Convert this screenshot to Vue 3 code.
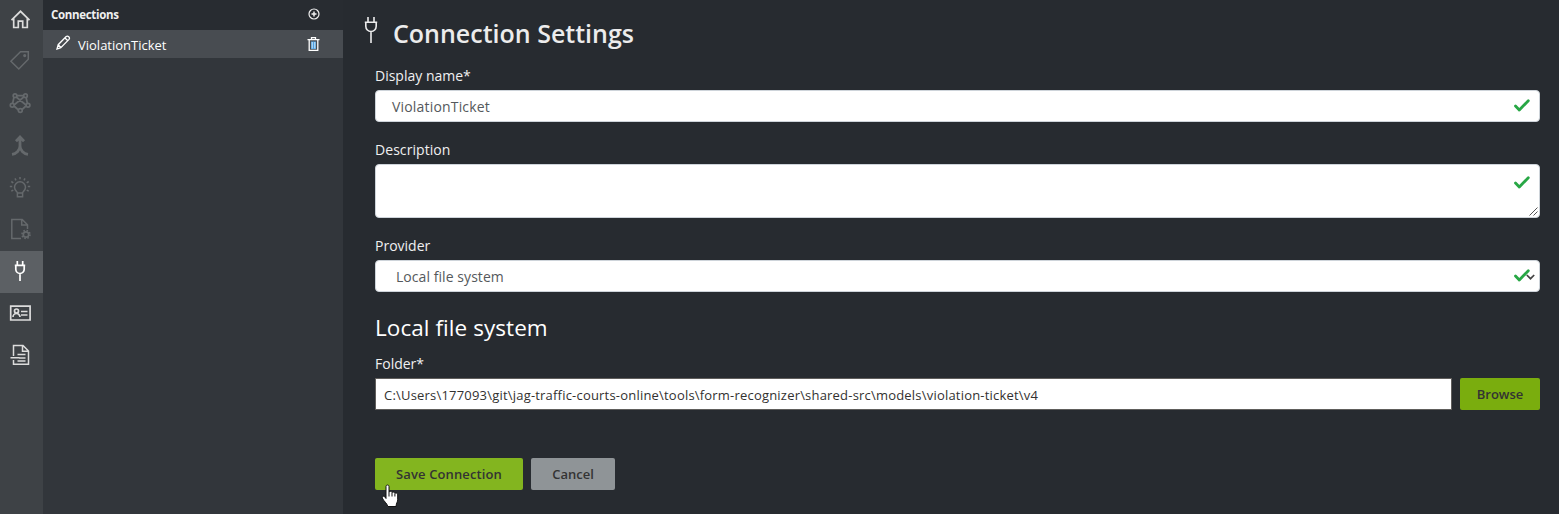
<script setup>
const nav = ['home', 'tag', 'model', 'merge', 'bulb', 'doc', 'plug', 'card', 'page']
const disabled = ['tag', 'model', 'merge', 'bulb', 'doc']
</script>

<template>
  <div class="app">
    <nav class="rail">
      <div v-for="n in nav" :key="n" class="item" :class="[n, { active: n === 'plug', dim: disabled.includes(n) }]">
        <svg width="22" height="22" viewBox="0 0 22 22" fill="none" stroke="currentColor" stroke-width="1.5">
          <path v-if="n === 'home'" stroke-width="1.700" d="M2.500 11.200 11.500 2.300l9 8.900M4.700 9.500v9h4.600v-6.300h4.400v6.300h4.600v-9" />
          <g v-else-if="n === 'tag'"><path d="M11.500 2.700h7.800v7.600L9.800 20 1.900 12.200z" /><circle cx="15.700" cy="6.600" r=".8" /></g>
          <g v-else-if="n === 'model'" stroke-width="1.700">
            <path d="M6 3.700h10M6 4l11 9M16 4 5 13M5 5 3.500 12M17 5l1.500 7M5 14l4.500 4M17 14l-4.500 4" />
            <g class="node"><circle cx="6" cy="3.700" r="1.800" /><circle cx="16.500" cy="3.700" r="1.800" /><circle cx="3.200" cy="13.300" r="1.900" /><circle cx="19" cy="13.300" r="1.900" /><circle cx="11.300" cy="18.500" r="1.900" /></g>
          </g>
          <path v-else-if="n === 'merge'" stroke-width="2.800" d="M7 6.200 11 2l4 4.200M11 2.500v8.500c0 4-3.500 7.700-8 8.300M11 11c0 4 3.500 7.700 8 8.300" />
          <g v-else-if="n === 'bulb'"><path d="M8.400 19.700v-4.100c-1-1.400-2.900-2.800-2.900-5.300a5.500 5.500 0 0 1 11 0c0 2.500-1.900 3.900-2.900 5.300v4.100zM8.400 16h5.200" /><path d="M11 0v2.300M6 1.300l1 2M16 1.300l-1 2M2.300 4.500l2 1.300M19.700 4.500l-2 1.300M.8 9.500h2.400M18.800 9.500h2.400M2.300 14.200l2-1M19.700 14.200l-2-1" /></g>
          <g v-else-if="n === 'doc'"><path d="M12 20.500H2.800V1.500h10.400l5.300 5.300V11M12.700 1.500v5.600h5.800" /><circle cx="17" cy="16.500" r="2.700" stroke-width="1.700" /><circle cx="17" cy="16.500" r="4" stroke-width="1.600" stroke-dasharray="1.570 1.570" /></g>
          <path v-else-if="n === 'plug'" stroke-width="1.700" d="M8.300 1v4.200M13.700 1v4.200M5.800 5.400h10.400M6.800 5.400v3.900a4.200 4.200 0 0 0 8.400 0V5.400M11 13.500v7.500" />
          <g v-else-if="n === 'card'" stroke-width="1.700"><path d="M1.700 4.200h19.400v13.800H1.700zM12 9.500h6.500M12 13h6.500" /><circle cx="7.500" cy="9" r="2" /><path d="M4 15a3.500 3.500 0 0 1 7 0" /></g>
          <path v-else d="M4.500 12V1.500h9.500l5.500 5.500v13.300h-15V16M13.500 1.500v5.800h6M1.500 13.800h9M8.500 10.500h8M10 13.900h6.500M8.500 17h8" />
        </svg>
      </div>
    </nav>

    <aside class="panel">
      <header class="phead">
        <span class="t-conn">Connections</span>
        <svg class="plus" width="12" height="12" viewBox="0 0 12 12" fill="none" stroke="currentColor" stroke-width="1.200"><circle cx="6" cy="6" r="5" /><path d="M6 3.500v5M3.500 6h5" stroke-width="1.500" /></svg>
      </header>
      <div class="row">
        <svg class="pencil" width="15" height="15" viewBox="0 0 15 15" fill="none" stroke="currentColor" stroke-width="1.300"><path d="m1 14 1.200-4.300 8-8.200c1.700-1.300 4.200 1 2.800 2.900l-8.200 8.200zM2.500 10l2.300 2.500M9 3l2.800 2.700" /></svg>
        <span class="t-item">ViolationTicket</span>
        <svg class="trash" width="13" height="14" viewBox="0 0 13 14" fill="none" stroke="currentColor" stroke-width="1.300"><path d="M.5 2.700h12M4.500 2.500V.7h4v1.800M2.200 3v10.300h8.600V3" /><path class="bin" d="M4 4.500h5V12H4z" /><path class="ribs" d="M5.200 5v6.500M7.800 5v6.500" /></svg>
      </div>
    </aside>

    <main class="main">
      <h2 class="title">
        <svg class="tplug" width="14" height="28" viewBox="0 0 14 28" fill="none" stroke="currentColor" stroke-width="1.600"><path d="M4 1v5M10 1v5M.8 6.300h12.400M1.800 6.300v4a5.200 5.200 0 0 0 10.400 0v-4M7 15.500V27" /></svg>
        <span>Connection Settings</span>
      </h2>
      <label>Display name*</label>
      <div class="field">
        <span class="v-name">ViolationTicket</span>
        <svg class="check" width="16" height="13" viewBox="0 0 16 13"><path d="m1.500 7 3.800 4L14.300 1.700" /></svg>
      </div>
      <label class="l-desc">Description</label>
      <div class="field area">
        <svg class="check" width="16" height="13" viewBox="0 0 16 13"><path d="m1.500 7 3.800 4L14.300 1.700" /></svg>
        <svg class="grip" width="9" height="9" viewBox="0 0 9 9"><path d="M.5 8.500l8-8M4.500 8.500l4-4" /></svg>
      </div>
      <label>Provider</label>
      <div class="field">
        <span class="v-prov">Local file system</span>
        <svg class="check" width="16" height="13" viewBox="0 0 16 13"><path d="m1.500 7 3.800 4L14.300 1.700" /></svg>
        <svg class="arrow" width="9" height="6" viewBox="0 0 9 6"><path d="m.8 1 3.700 3.700L8.200 1" /></svg>
      </div>
      <h4 class="sub"><span>Local file system</span></h4>
      <label>Folder*</label>
      <div class="folder">
        <div class="path"><span>C:\Users\177093\git\jag-traffic-courts-online\tools\form-recognizer\shared-src\models\violation-ticket\v4</span></div>
        <button class="btn browse"><span>Browse</span></button>
      </div>
      <div class="actions">
        <button class="btn save"><span>Save Connection</span></button>
        <button class="btn cancel"><span>Cancel</span></button>
      </div>
      <svg class="cursor" width="19" height="24" viewBox="0 0 19 24"><path d="M5 14.500V2.500C5 .5 8 .5 8 2.500V8c.8-1 2.800-.8 3 .5 1-.8 2.600-.4 2.900.8 1-.6 2.800-.2 2.800 1.500v5c0 2-1.400 3-1.700 6.700H6.800C6.300 19.500 2.500 17 1.300 14c-.7-2 1.500-2.500 2.700-.8z" /><path class="fingers" d="M8 8v4.500M11 8.800v3.700M13.900 9.500v3" /></svg>
    </main>
  </div>
</template>

<style>
body { margin: 0; overflow: hidden; background: #272b30; }
</style>
<style scoped>
* { box-sizing: border-box; }
.app { display: flex; width: 1559px; height: 514px; font-family: "Open Sans", "Noto Sans", sans-serif; color: #f0f0f0; background: #272b30; }
span, label { white-space: nowrap; }
svg { display: block; flex: none; }
.rail { width: 43px; background: #3e4246; flex: none; }
.item { height: 42px; display: flex; justify-content: center; align-items: center; padding: 0 3px 2px 0; color: #dcdcdc; }
.item.home { height: 41px; padding-bottom: 1px; }
.item.tag { padding-bottom: 4px; }
.item.merge { padding-bottom: 1px; }
.item.bulb { padding-bottom: 0; }
.dim { color: #65696c; }
.item.active { background: #5c6064; color: #fff; }
.node { fill: #3e4246; }
.panel { width: 300px; background: #32363b; flex: none; }
.phead { height: 30px; background: #282c31; display: flex; justify-content: space-between; align-items: center; padding: 0 23px 2px 8px; }
.t-conn { font-size: 11.500px; font-weight: 700; letter-spacing: -.32px; }
.row { height: 28px; background: #484c51; display: flex; align-items: center; padding: 0 23px 0 13px; color: #fff; }
.pencil { margin-bottom: 3px; }
.t-item { margin-left: 7px; font-size: 13px; flex: 1; padding-top: 1px; }
.bin { fill: #4c9fe0; stroke: none; }
.ribs { stroke: #d5eaf8; stroke-width: 1; }
.main { flex: 1; position: relative; padding: 0 19px 0 32px; display: flex; flex-direction: column; }
.title { margin: 0 0 0 -11px; height: 65px; display: flex; align-items: flex-start; font-size: 25px; line-height: 34px; font-weight: 600; color: #ececec; padding-top: 16px; }
.title span { margin: 0 0 0 15px; }
label { font-size: 14px; line-height: 21px; height: 25px; color: #f0f0f0; align-self: flex-start; }
.l-desc { letter-spacing: .06px; }
.field { position: relative; height: 32px; background: #fff; border: 1px solid #ced4da; border-radius: 4px; color: #55595c; font-size: 14px; display: flex; align-items: center; padding-left: 16px; margin-bottom: 17px; }
.field.area { height: 54px; }
.v-name { letter-spacing: .18px; }
.v-prov { margin-left: 4px; letter-spacing: .06px; }
.check { position: absolute; right: 9.500px; top: 8px; fill: none; stroke: #28a745; stroke-width: 2.800; stroke-linecap: round; stroke-linejoin: round; }
.area .check { top: 11px; }
.arrow { position: absolute; right: 4.500px; top: 13px; fill: none; stroke: #444; stroke-width: 1.700; }
.grip { position: absolute; right: 1px; bottom: 1px; fill: none; stroke: #555; stroke-width: 1; }
.sub { margin: 2px 0 0; height: 42px; line-height: 34px; font-size: 22.500px; font-weight: 400; color: #fff; letter-spacing: .06px; }
.folder { display: flex; gap: 8px; }
.path { flex: 1; height: 32px; background: #fff; border: 1px solid #605e5c; color: #323130; display: flex; align-items: center; padding: 1px 0 0 8px; font-size: 13px; letter-spacing: .2px; }
.btn { height: 32px; border: 0; border-radius: 2px; padding: 0; font-family: inherit; font-weight: 600; font-size: 13px; color: #333; }
.browse { width: 80px; background: #7aad0e; }
.save { width: 148px; background: #83b51f; letter-spacing: .12px; }
.cancel { width: 84px; background: #8f9497; }
.actions { display: flex; gap: 8px; margin-top: 48px; }
.cursor { position: absolute; left: 38px; top: 484px; fill: #fff; stroke: #111; stroke-width: 1; }
.fingers { fill: none; }
</style>
